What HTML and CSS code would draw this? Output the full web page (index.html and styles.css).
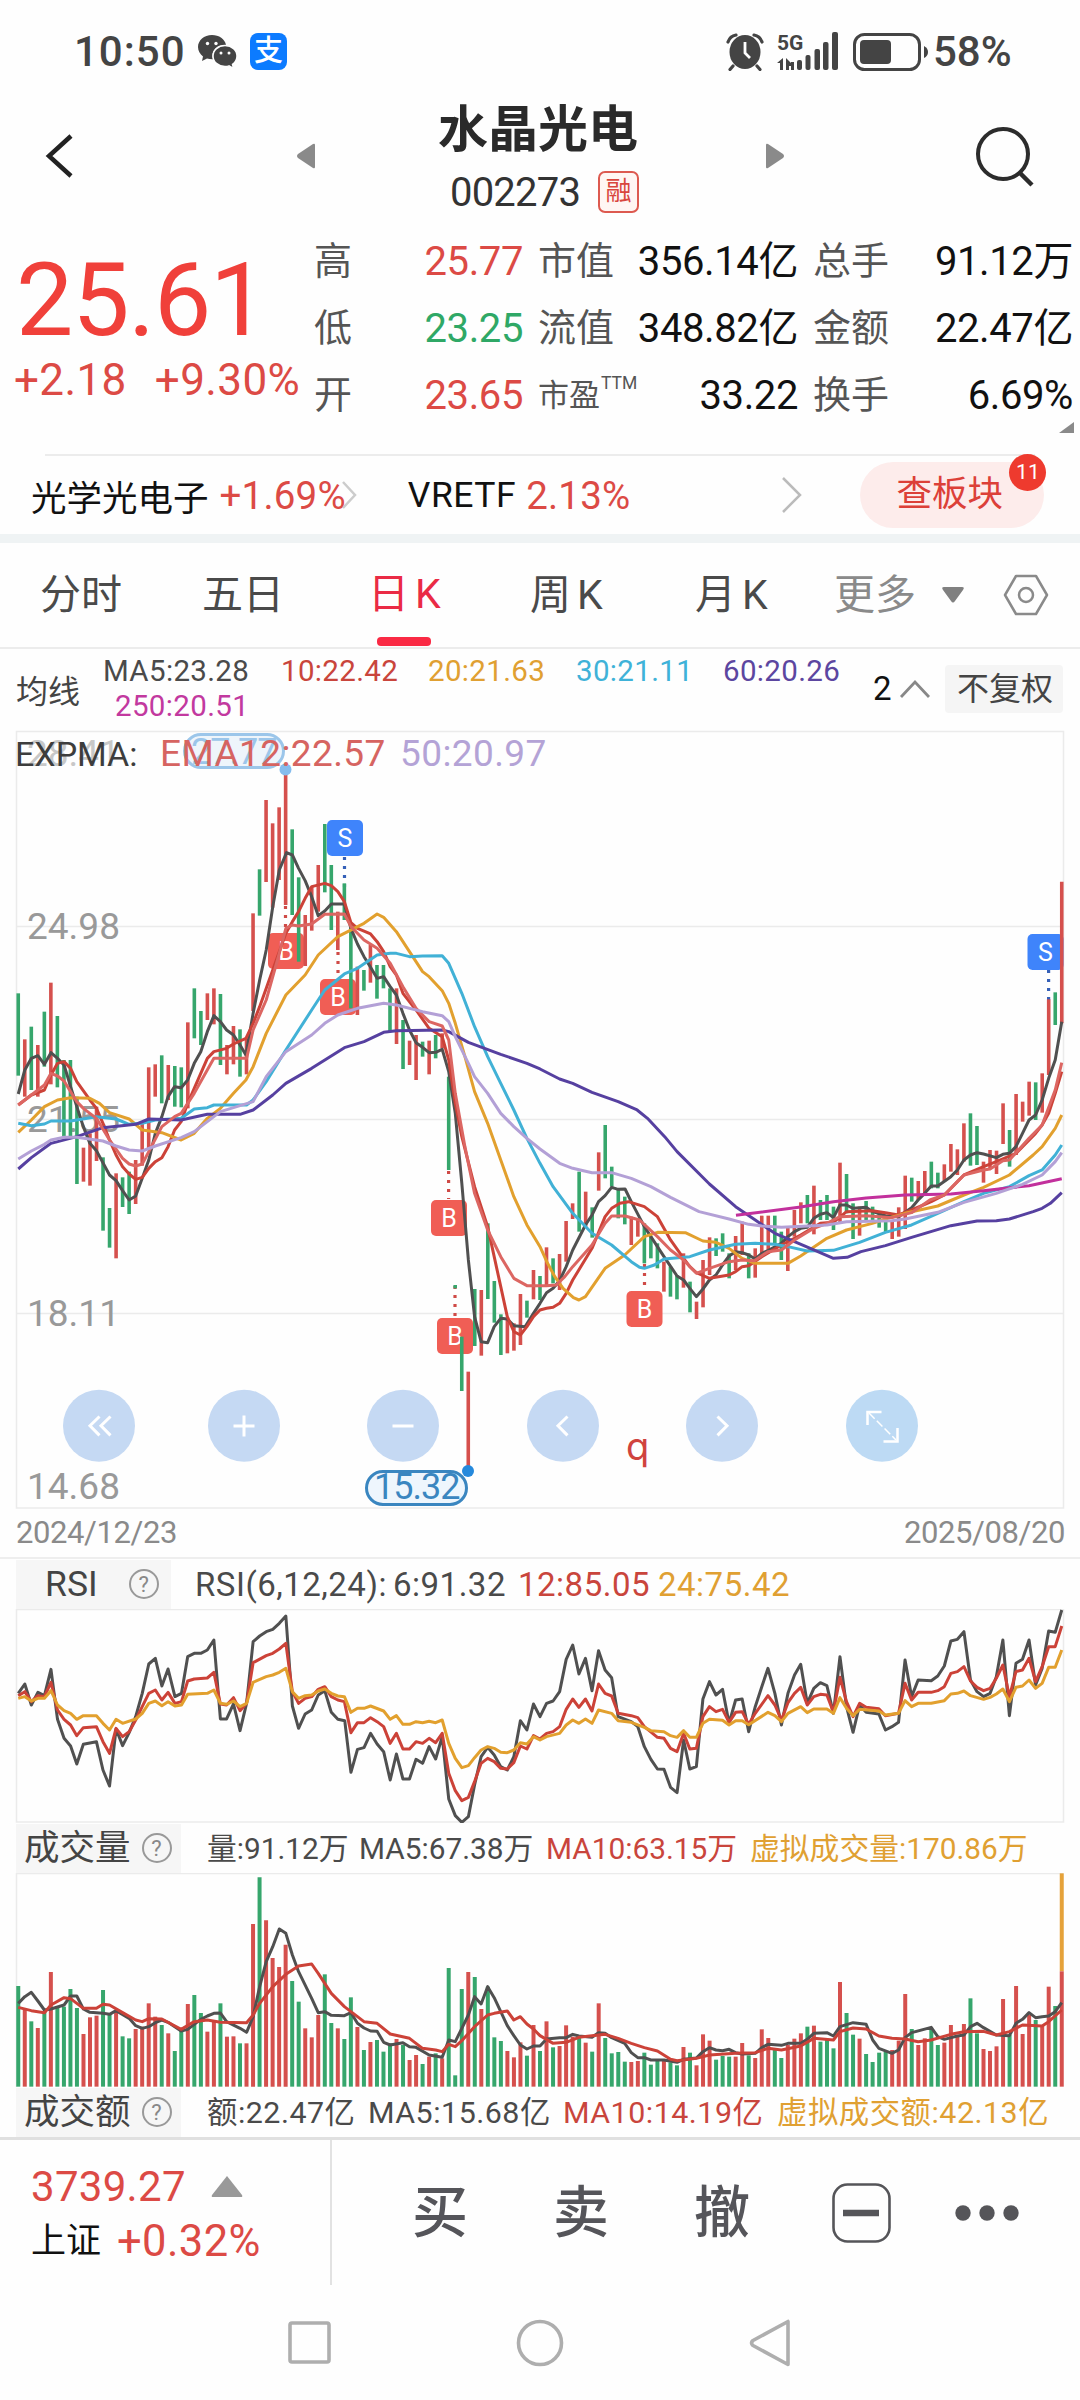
FILE: index.html
```html
<!DOCTYPE html>
<html lang="zh-CN">
<head>
<meta charset="utf-8">
<title>水晶光电 002273</title>
<link rel="stylesheet" href="styles.css">
</head>
<body>
<div class="phone">
  <div class="status">
    <span class="clock">10:50</span>
    <svg class="ic-wechat" width="40" height="34" viewBox="0 0 40 34"><path fill="#444" d="M14 0C6 0 0 5.500 0 12c0 4 2 7 5 9.500L4 26l5-2.500c2 .6 4 .9 6 .8A12 11 0 0 1 28 10C27 4 21 0 14 0z"/><path fill="#444" stroke="#fefefe" stroke-width="1.500" d="M27 10.500c-7 0-12 4.700-12 10.500s5 10.500 12 10.500c1.500 0 3-.2 4-.6l4.500 2.400-1-4c3-2 4.500-5 4.500-8.300 0-5.800-5-10.500-12-10.500z"/><g fill="#fefefe"><circle cx="9.500" cy="8.500" r="1.700"/><circle cx="18" cy="8.500" r="1.700"/><circle cx="23" cy="18" r="1.500"/><circle cx="31" cy="18" r="1.500"/></g></svg>
    <span class="alipay">支</span>
    <svg class="ic-alarm" width="38" height="38" viewBox="0 0 38 38"><ellipse cx="19" cy="19" rx="15.500" ry="17" fill="#444"/><path d="M2 9Q4 3 10 2M36 9Q34 3 28 2M7 33l-3 3.500M31 33l3 3.500" stroke="#444" stroke-width="3.200" fill="none" stroke-linecap="round"/><path d="M19 9v11l5 5" stroke="#fefefe" stroke-width="2.800" fill="none"/></svg>
    <svg class="ic-signal" width="62" height="40" viewBox="0 0 62 40"><text x="0" y="18" class="fiveg">5G</text><g fill="#444"><path d="M0 31l6-5v12H3v-7zM9 26l8 8h-5v4H9zM14 38v-8h3v8z"/><rect x="20" y="28" width="5" height="10" rx="2"/><rect x="28.500" y="23" width="5" height="15" rx="2"/><rect x="37.500" y="17" width="5.500" height="21" rx="2"/><rect x="46" y="10" width="5.500" height="28" rx="2"/><rect x="55" y="0" width="6" height="38" rx="2"/></g></svg>
    <svg class="ic-battery" width="76" height="38" viewBox="0 0 76 38"><rect x="1.500" y="1.500" width="65" height="35" rx="10" fill="none" stroke="#444" stroke-width="3"/><rect x="7" y="7" width="31" height="24" rx="4" fill="#444"/><path d="M71 13v12q4-2 4-6t-4-6z" fill="#444"/></svg>
    <span class="pct">58%</span>
  </div>

  <header class="head">
    <svg class="ic-back" width="30" height="50" viewBox="0 0 30 50"><path d="M26 5L4 25l22 20" fill="none" stroke="#222" stroke-width="4.500"/></svg>
    <svg class="tri-l" width="20" height="28" viewBox="0 0 20 28"><path d="M17 2L2 12q-2 2 0 4l15 10q2 1 2-1V3q0-2-2-1z" fill="#8a8a8a"/></svg>
    <div class="title"><h1>水晶光电</h1><div class="code"><span>002273</span><i>融</i></div></div>
    <svg class="tri-r" width="20" height="28" viewBox="0 0 20 28"><path d="M3 2l15 10q2 2 0 4L3 26q-2 1-2-1V3q0-2 2-1z" fill="#8a8a8a"/></svg>
    <svg class="ic-search" width="62" height="62" viewBox="0 0 62 62"><circle cx="28" cy="28" r="25" fill="none" stroke="#2c2c2c" stroke-width="4"/><path d="M44 46l13 13" stroke="#2c2c2c" stroke-width="4.500"/></svg>
  </header>

  <section class="quote">
    <div class="price"><div class="now">25.61</div><div class="chg"><span>+2.18</span><span>+9.30%</span></div></div>
    <div class="stats">
      <span class="k">高</span><span class="v red">25.77</span><span class="k">市值</span><span class="v">356.14亿</span><span class="k">总手</span><span class="v">91.12万</span>
      <span class="k">低</span><span class="v green">23.25</span><span class="k">流值</span><span class="v">348.82亿</span><span class="k">金额</span><span class="v">22.47亿</span>
      <span class="k">开</span><span class="v red">23.65</span><span class="k pe">市盈<sup>TTM</sup></span><span class="v">33.22</span><span class="k">换手</span><span class="v">6.69%</span>
    </div>
    <svg class="corner" width="16" height="12" viewBox="0 0 16 12"><path d="M15 0v11H0z" fill="#8a8a8a"/></svg>
  </section>

  <section class="sector">
    <span class="name">光学光电子</span><span class="up">+1.69%</span>
    <svg class="chev1" width="16" height="30" viewBox="0 0 16 30"><path d="M2 2l12 13L2 28" fill="none" stroke="#ccc" stroke-width="2.500"/></svg>
    <span class="name">VRETF</span><span class="up etf">2.13%</span>
    <svg class="chev2" width="22" height="38" viewBox="0 0 22 38"><path d="M2 2l17 17L2 36" fill="none" stroke="#bbb" stroke-width="2.500"/></svg>
    <span class="pill">查板块<b>11</b></span>
  </section>

  <nav class="tabs">
    <span>分时</span><span>五日</span><span class="on">日<em>K</em></span><span>周<em>K</em></span><span>月<em>K</em></span><span class="more">更多</span>
    <svg width="24" height="18" viewBox="0 0 24 18"><path d="M3 1h18q3 0 1 3l-8 11q-2 3-4 0L2 4Q0 1 3 1z" fill="#808080"/></svg>
    <svg width="46" height="42" viewBox="0 0 46 42"><path d="M13 2h20l11 19-11 19H13L2 21z" fill="none" stroke="#8a8a8a" stroke-width="2.500" stroke-linejoin="round"/><circle cx="23" cy="21" r="7" fill="none" stroke="#8a8a8a" stroke-width="2.500"/></svg>
  </nav>

  <section class="ma">
    <span class="ma-name">均线</span>
    <div class="ma-list"><span class="c-dark">MA5:23.28</span><span class="c-ma10">10:22.42</span><span class="c-or">20:21.63</span><span class="c-cy">30:21.11</span><span class="c-pu">60:20.26</span><span class="c-mg">250:20.51</span></div>
    <span class="two">2</span>
    <svg width="32" height="20" viewBox="0 0 32 20"><path d="M2 18L16 3l14 15" fill="none" stroke="#888" stroke-width="2.800"/></svg>
    <span class="fq">不复权</span>
  </section>

  <section class="kchart">
    <svg width="1080" height="790" viewBox="0 720 1080 790">
      <path d="M16.500 1508V731.500H1063.500V1508zM16.500 926.500H1063.500M16.500 1119.500H1063.500M16.500 1313.500H1063.500" class="frame"/>
      <g class="axis"><text x="27" y="766" fill="#c8c8c8">28.41</text><text x="27" y="938.500">24.98</text><text x="27" y="1131.500">21.55</text><text x="27" y="1325.500">18.11</text><text x="27" y="1498.500">14.68</text></g>
      <g class="ctl"><circle cx="99" cy="1425.700" r="36"/><circle cx="244" cy="1425.700" r="36"/><circle cx="403" cy="1425.700" r="36"/><circle cx="563" cy="1425.700" r="36"/><circle cx="722" cy="1425.700" r="36"/><circle cx="882" cy="1425.700" r="36" class="full"/>
        <path d="M99.500 1416.500l-9.500 9.200 9.500 9.700M110.500 1416.500l-9.500 9.200 9.500 9.700M233.500 1426h21M244 1415.500v21M392.500 1426h21M567.500 1416.500l-9.500 9.200 9.500 9.700M717.500 1416.500l9.500 9.200-9.500 9.700"/>
        <path class="thin" d="M867.500 1425v-13h14M897.500 1428v13.500h-14"/><path class="dash" d="M869 1413l27 27"/></g>
      <g id="markers" class="markers"></g>
      <g transform="translate(0 720) scale(.34439 .33333)">
        <g id="candles" class="candles"></g>
        <polyline class="ln c-dark" points="53,1122 72,1050 91,1015 110,1007 129,1033 148,998 167,1015 186,1035 205,1100 223,1160 242,1220 261,1270 280,1292 318,1365 337,1382 356,1412 375,1440 394,1428 413,1375 432,1320 451,1240 470,1190 488,1130 507,1100 526,1103 545,1080 564,1030 583,995 602,935 621,887 640,905 658,930 678,945 697,975 714,1005 735,880 754,780 773,690 792,560 811,450 832,398 849,405 867,445 886,482 905,530 924,587 943,573 962,552 1000,552 1019,625 1038,672 1057,710 1076,742 1095,775 1114,770 1133,800 1151,825 1170,880 1189,930 1208,968 1227,982 1246,998 1265,997 1284,988 1303,1055 1322,1180 1341,1390 1360,1620 1378,1790 1397,1865 1416,1868 1435,1820 1454,1795 1473,1797 1492,1817 1525,1820 1549,1780 1568,1750 1587,1718 1606,1705 1625,1682 1644,1640 1663,1590 1700,1515 1719,1485 1738,1445 1757,1427 1776,1402 1795,1408 1815,1407 1833,1445 1871,1520 1909,1580 1928,1610 1966,1668 1985,1680 2003,1705 2022,1730 2041,1707 2060,1680 2079,1665 2098,1635 2117,1608 2136,1595 2155,1598 2174,1605 2193,1617 2212,1600 2230,1592 2269,1570 2288,1550 2307,1535 2325,1525 2344,1522 2363,1495 2382,1483 2401,1478 2420,1493 2439,1455 2458,1455 2477,1465 2515,1462 2534,1475 2571,1487 2609,1490 2647,1463 2666,1440 2685,1420 2704,1398 2723,1398 2761,1370 2780,1350 2799,1320 2818,1305 2837,1298 2856,1302 2893,1313 2912,1303 2931,1300 2950,1280 2969,1240 2988,1200 3007,1185 3026,1140 3045,1075 3064,1020 3083,905"/>
        <polyline class="ln c-ma10" points="53,1155 91,1125 129,1110 148,1065 167,1030 186,1025 205,1045 223,1085 261,1140 280,1165 299,1210 318,1260 337,1305 356,1340 375,1362 394,1378 413,1372 432,1345 451,1325 470,1313 488,1280 507,1230 526,1205 545,1150 564,1105 602,1015 621,995 658,985 678,972 714,955 735,910 754,860 792,750 811,695 830,640 849,605 867,575 886,535 905,500 943,490 962,497 981,515 1000,545 1019,608 1038,625 1076,642 1095,665 1114,695 1133,740 1151,765 1170,820 1208,870 1246,925 1284,950 1303,1020 1322,1150 1341,1250 1378,1400 1416,1520 1454,1700 1473,1790 1492,1835 1511,1845 1530,1820 1549,1790 1568,1770 1587,1765 1606,1762 1625,1750 1644,1720 1663,1680 1719,1585 1757,1490 1776,1465 1800,1450 1825,1445 1871,1460 1909,1490 1947,1560 1985,1615 2003,1640 2022,1658 2060,1675 2117,1665 2136,1655 2155,1640 2174,1637 2212,1610 2269,1575 2325,1545 2382,1510 2420,1507 2458,1475 2533,1472 2571,1478 2609,1485 2647,1470 2704,1445 2742,1425 2780,1385 2799,1365 2856,1340 2893,1325 2950,1300 3007,1240 3026,1215 3045,1180 3064,1120 3083,1055"/>
        <polyline class="ln c-or" points="53,1237 91,1200 129,1160 167,1140 205,1133 261,1135 289,1150 318,1178 375,1197 413,1230 470,1238 526,1260 564,1240 602,1195 640,1165 678,1120 714,1080 735,1040 773,940 830,825 886,765 924,705 981,650 1057,610 1095,582 1114,592 1151,635 1189,695 1227,755 1246,770 1284,812 1303,850 1322,910 1350,1010 1378,1115 1416,1210 1454,1320 1492,1430 1530,1515 1568,1580 1590,1630 1611,1670 1635,1705 1665,1733 1681,1740 1700,1730 1757,1645 1814,1605 1871,1550 1909,1537 1990,1538 2041,1563 2079,1567 2117,1585 2155,1615 2193,1630 2288,1630 2325,1608 2401,1555 2458,1530 2533,1510 2571,1497 2628,1480 2723,1458 2799,1425 2856,1402 2931,1365 3000,1305 3026,1280 3064,1225 3083,1185"/>
        <polyline class="ln c-cy" points="53,1210 91,1217 129,1212 148,1203 205,1203 280,1190 337,1197 375,1213 413,1210 451,1200 526,1195 564,1167 602,1163 621,1155 716,1155 735,1140 773,1085 830,990 905,870 943,810 1000,762 1038,745 1095,705 1133,700 1151,700 1189,710 1227,708 1284,707 1303,730 1341,820 1378,920 1416,1010 1454,1090 1492,1170 1530,1255 1568,1330 1606,1400 1663,1480 1719,1540 1776,1575 1833,1625 1857,1642 1871,1645 1900,1635 1928,1617 2003,1610 2060,1590 2136,1573 2193,1570 2250,1573 2288,1580 2344,1593 2420,1591 2496,1567 2571,1537 2647,1515 2723,1480 2799,1445 2856,1420 2931,1400 2988,1367 3026,1350 3064,1305 3083,1275"/>
        <polyline class="ln c-pu" points="53,1347 91,1313 148,1270 223,1250 299,1223 394,1213 432,1197 526,1200 602,1183 697,1183 735,1170 792,1125 830,1090 905,1045 1000,983 1057,965 1114,937 1151,932 1284,930 1303,935 1360,967 1454,1003 1530,1030 1568,1047 1625,1077 1663,1090 1719,1117 1795,1145 1850,1170 1880,1195 1930,1250 1966,1295 2060,1392 2136,1460 2193,1500 2250,1540 2307,1565 2363,1590 2420,1615 2460,1612 2500,1595 2571,1577 2647,1552 2761,1517 2837,1503 2893,1502 2931,1497 3000,1475 3026,1465 3050,1450 3083,1418"/>
        <polyline class="ln c-mg" points="2137,1486 2325,1461 2420,1445 2515,1434 2628,1425 2761,1422 2856,1412 2988,1397 3083,1376"/>
        <polyline class="ln c-ema" points="53,1155 91,1125 129,1095 148,1060 167,1068 186,1083 223,1145 242,1165 280,1195 318,1260 356,1315 375,1332 394,1338 413,1332 432,1295 470,1220 507,1190 526,1180 564,1120 621,1015 716,1015 735,930 773,840 811,700 830,625 849,615 867,618 905,612 943,583 1000,582 1019,620 1057,660 1095,685 1133,730 1170,800 1208,865 1246,905 1284,918 1303,960 1322,1120 1350,1280 1378,1420 1416,1530 1454,1610 1492,1675 1530,1697 1587,1697 1615,1695 1640,1670 1663,1640 1719,1575 1757,1510 1776,1488 1815,1488 1857,1500 1909,1550 1947,1590 1985,1620 2022,1660 2060,1645 2117,1625 2155,1620 2190,1622 2230,1595 2269,1590 2307,1560 2363,1525 2401,1510 2439,1490 2515,1487 2590,1493 2647,1478 2700,1440 2742,1425 2799,1365 2856,1350 2875,1347 2912,1322 2931,1320 2988,1255 3026,1215 3064,1110 3083,1028"/>
        <polyline class="ln c-li" points="53,1317 91,1293 129,1273 148,1260 186,1252 223,1252 299,1263 337,1278 375,1290 413,1293 451,1278 526,1253 564,1235 640,1175 735,1145 773,1070 830,995 905,945 943,910 981,885 1038,865 1114,850 1151,855 1227,875 1284,887 1303,905 1322,950 1360,1030 1378,1070 1416,1120 1454,1180 1492,1220 1530,1255 1568,1287 1625,1330 1663,1345 1719,1358 1776,1358 1833,1375 1890,1400 1947,1432 2030,1475 2117,1497 2174,1513 2212,1518 2269,1522 2363,1517 2401,1515 2458,1505 2590,1502 2628,1497 2723,1477 2799,1447 2893,1420 2969,1393 3026,1365 3064,1325 3083,1298"/>
      </g>
      <rect x="184.500" y="734.500" width="99" height="33" rx="16.500" fill="#eef5fb" stroke="#9cc6ea" stroke-width="3"/><text x="191" y="764" class="tag" fill="#9cc6ea">27.77</text><circle cx="285.500" cy="769.500" r="6" fill="#85bced"/>
      <rect x="366.500" y="1471.500" width="100" height="33" rx="16.500" fill="#eef6fd" stroke="#3a86c0" stroke-width="3"/><text x="374" y="1499" class="tag" fill="#3a86c0">15.32</text><circle cx="468" cy="1471" r="6" fill="#2589dc"/>
      <text x="626" y="1459.500" class="q">q</text>
    </svg>
    <div class="expma"><span class="e0">EXPMA:</span><span class="e1">EMA12:22.57</span><span class="e2">50:20.97</span></div>
  </section>
  <div class="dates"><span>2024/12/23</span><span>2025/08/20</span></div>

  <section class="ind rsi">
    <div class="ind-head"><span class="tab"><b>RSI</b><i>?</i></span><span class="c-dark">RSI(6,12,24):</span><span class="c-dark">6:91.32</span><span class="c-ma10">12:85.05</span><span class="c-or">24:75.42</span></div>
    <svg width="1080" height="214" viewBox="0 1609 1080 214">
      <path d="M16.500 1609.500H1063.500V1822H16.500z" class="frame"/>
      <g transform="translate(0 1550) scale(.34439 .33333)">
        <polyline class="ln c-dark" points="53,430 72,402 91,465 110,427 129,437 148,358 167,508 186,565 205,588 223,642 242,583 280,575 299,660 318,708 337,537 356,587 375,548 394,500 413,430 432,342 451,325 470,408 488,357 508,440 527,430 545,320 564,310 583,310 602,300 621,270 640,507 658,507 678,462 697,542 716,460 735,275 754,258 773,245 792,238 811,220 830,198 849,468 867,535 886,492 905,480 924,435 943,422 962,487 981,508 1001,512 1019,667 1038,598 1057,593 1076,550 1095,582 1114,605 1133,690 1151,612 1170,687 1189,687 1208,628 1227,640 1246,590 1265,627 1284,560 1303,747 1322,797 1341,817 1360,800 1378,705 1397,620 1416,592 1435,615 1454,650 1473,660 1492,620 1511,512 1530,540 1549,462 1568,500 1587,460 1606,453 1625,425 1644,328 1663,285 1681,372 1700,325 1719,422 1738,302 1757,360 1776,383 1795,500 1833,515 1852,530 1871,590 1890,628 1909,657 1928,658 1947,712 1966,728 1985,570 2003,657 2022,650 2041,447 2060,395 2079,435 2098,418 2117,520 2136,450 2155,447 2174,545 2193,470 2212,410 2230,355 2250,430 2269,525 2288,430 2307,375 2325,343 2344,460 2363,415 2382,398 2401,407 2420,490 2439,320 2458,470 2477,547 2496,465 2515,487 2552,492 2571,540 2590,530 2609,517 2628,330 2647,440 2666,390 2704,392 2723,378 2742,348 2761,273 2780,268 2799,245 2818,390 2837,425 2856,440 2875,430 2893,380 2912,270 2931,497 2950,340 2969,328 2988,270 3007,405 3026,355 3045,243 3064,247 3083,180"/>
        <polyline class="ln c-ma10" points="53,437 72,425 91,455 110,437 129,440 148,397 167,480 186,508 205,525 223,557 242,533 280,530 299,575 318,610 337,535 356,560 375,545 394,510 413,470 432,430 451,420 470,450 488,427 508,460 527,455 545,393 564,387 602,384 621,367 640,462 658,465 678,443 697,482 716,460 735,338 773,317 792,310 811,297 830,280 849,425 867,460 886,445 905,440 924,418 943,410 962,440 981,450 1000,455 1019,548 1038,518 1057,518 1076,503 1095,515 1114,530 1133,580 1151,550 1170,597 1189,597 1208,575 1227,580 1246,565 1265,578 1284,550 1303,670 1322,722 1341,752 1360,742 1378,695 1397,640 1416,625 1435,635 1454,655 1473,657 1492,638 1511,588 1530,597 1549,557 1568,567 1587,550 1606,545 1625,530 1644,478 1663,447 1681,472 1700,447 1719,483 1738,402 1757,430 1776,438 1795,490 1833,497 1852,503 1871,530 1909,562 1928,565 1947,595 1966,605 1985,550 2003,597 2022,595 2041,500 2060,470 2079,485 2098,478 2117,517 2136,487 2155,485 2174,523 2193,490 2230,437 2250,465 2269,510 2288,458 2307,430 2325,412 2344,465 2363,440 2382,433 2401,435 2420,487 2439,382 2458,455 2477,500 2496,460 2515,472 2552,476 2571,497 2609,490 2628,400 2647,450 2666,427 2704,427 2723,422 2742,410 2761,370 2780,365 2799,350 2818,393 2837,412 2856,422 2875,415 2893,385 2912,345 2931,440 2950,365 2969,360 2988,325 3007,395 3026,350 3045,290 3064,290 3083,228"/>
        <polyline class="ln c-or" points="53,445 72,440 91,453 110,445 129,445 148,422 167,465 186,482 205,490 223,508 242,497 280,497 299,520 318,540 337,508 356,520 394,507 413,490 432,460 451,453 470,467 488,455 508,468 527,465 545,433 602,430 621,420 640,460 658,463 678,453 697,470 716,460 735,397 773,380 792,375 811,367 830,355 849,425 867,445 886,437 905,435 924,423 943,417 962,430 981,438 1000,440 1019,487 1038,475 1057,475 1076,468 1114,483 1133,508 1151,497 1170,523 1189,523 1208,515 1227,518 1246,514 1265,518 1284,510 1303,580 1322,625 1341,653 1360,647 1378,623 1397,600 1416,590 1435,595 1454,607 1473,608 1492,600 1511,578 1530,582 1549,560 1568,570 1587,560 1625,550 1644,525 1663,510 1681,520 1700,507 1719,520 1738,480 1776,490 1795,512 1833,517 1871,532 1890,542 1928,545 1947,557 1966,562 1985,542 2003,562 2022,562 2041,520 2060,508 2098,511 2117,525 2136,512 2155,512 2174,524 2230,487 2250,497 2269,515 2288,490 2325,470 2344,488 2363,477 2401,477 2420,490 2439,443 2458,475 2477,497 2496,478 2552,483 2571,495 2609,490 2628,452 2647,470 2666,460 2704,460 2742,452 2761,432 2780,430 2799,423 2818,437 2856,448 2875,442 2893,432 2912,417 2931,455 2950,412 2969,408 2988,390 3007,415 3026,400 3045,352 3064,352 3083,300"/>
      </g>
    </svg>
  </section>

  <section class="ind vol">
    <div class="ind-head"><span class="tab"><b>成交量</b><i>?</i></span><span class="c-dark">量:91.12万</span><span class="c-dark">MA5:67.38万</span><span class="c-ma10">MA10:63.15万</span><span class="c-or">虚拟成交量:170.86万</span></div>
    <svg width="1080" height="214" viewBox="0 1873 1080 214">
      <path d="M16.500 2087V1873.500H1063.500" class="frame"/>
      <g transform="translate(0 1830) scale(.34439 .33333)">
        <path d="M3083 130V424" stroke="#e5a23a" stroke-width="4" class="nss"/>
        <g id="volume" class="volume"></g>
        <polyline class="ln c-dark" points="53,520 72,500 91,487 110,513 129,540 148,537 186,525 205,498 223,498 242,537 261,547 299,550 318,553 337,542 375,565 394,587 413,595 432,590 451,578 470,570 488,577 526,603 545,598 583,568 602,558 621,550 640,549 658,575 697,595 716,607 735,560 754,470 773,395 792,350 811,297 830,310 849,375 867,425 905,505 924,548 943,545 962,556 1000,557 1019,548 1038,580 1057,594 1076,603 1095,604 1114,637 1133,645 1170,638 1189,650 1208,652 1246,675 1284,682 1303,630 1322,635 1341,595 1360,555 1378,500 1397,522 1416,470 1435,503 1454,545 1473,587 1492,617 1511,645 1530,657 1549,648 1568,648 1587,627 1625,623 1644,623 1663,613 1681,618 1719,622 1738,608 1757,610 1776,623 1814,640 1833,668 1852,683 1871,683 1890,690 1928,690 1966,697 1985,688 2022,684 2041,665 2060,653 2079,660 2098,662 2117,658 2136,668 2155,672 2193,670 2212,653 2230,643 2269,646 2288,640 2325,640 2344,628 2363,610 2401,608 2420,618 2439,590 2477,578 2515,583 2534,630 2552,655 2590,670 2609,660 2628,623 2647,608 2704,592 2723,620 2742,628 2780,618 2799,615 2818,590 2837,580 2856,593 2893,615 2931,617 2950,580 2969,568 2988,548 3007,563 3026,560 3045,558 3064,545 3083,518"/>
        <polyline class="ln c-ma10" points="53,532 91,542 129,548 148,525 186,503 205,506 242,535 280,535 299,523 318,525 356,548 394,570 413,575 432,566 470,567 526,598 564,575 602,570 640,577 716,578 735,555 754,520 792,470 830,433 867,408 905,402 924,430 962,490 1000,530 1057,575 1095,580 1133,612 1189,625 1227,655 1265,660 1284,665 1303,643 1322,650 1341,632 1378,590 1416,555 1435,550 1473,543 1492,570 1511,560 1530,582 1549,597 1568,617 1606,640 1644,637 1681,622 1757,613 1795,625 1833,640 1871,653 1909,663 1947,688 1966,692 2022,685 2060,675 2136,670 2193,668 2230,655 2269,660 2325,648 2363,625 2420,630 2439,605 2477,594 2515,597 2552,618 2590,625 2628,627 2666,635 2704,630 2761,613 2799,605 2856,604 2893,615 2931,605 2969,585 3026,588 3045,575 3083,540"/>
      </g>
    </svg>
  </section>

  <section class="ind amt">
    <div class="ind-head"><span class="tab"><b>成交额</b><i>?</i></span><span class="c-dark">额:22.47亿</span><span class="c-dark">MA5:15.68亿</span><span class="c-ma10">MA10:14.19亿</span><span class="c-or">虚拟成交额:42.13亿</span></div>
  </section>

  <footer class="bar">
    <div class="index"><div class="pt">3739.27<svg width="32" height="22" viewBox="0 0 32 22"><path d="M16 0l15 19q1 2-1 2H2q-2 0-1-2z" fill="#999"/></svg></div><div class="sh"><span>上证</span><b>+0.32%</b></div></div>
    <span class="act">买</span><span class="act">卖</span><span class="act">撤</span>
    <svg width="60" height="60" viewBox="0 0 60 60"><rect x="1.500" y="1.500" width="56" height="57" rx="14" fill="none" stroke="#555559" stroke-width="2.600"/><path d="M11 30h36" stroke="#555559" stroke-width="6.500"/></svg>
    <svg width="66" height="18" viewBox="0 0 66 18" fill="#555559"><circle cx="9" cy="9" r="7.700"/><circle cx="33" cy="9" r="7.700"/><circle cx="57" cy="9" r="7.700"/></svg>
  </footer>
  <div class="sysnav">
    <svg width="44" height="44" viewBox="0 0 44 44"><rect x="2" y="2" width="39" height="39" rx="2" /></svg>
    <svg width="48" height="48" viewBox="0 0 48 48"><circle cx="24" cy="24" r="21.500"/></svg>
    <svg width="44" height="50" viewBox="0 0 44 50"><path d="M39 3.500v43L4 27.500q-3-2.500 0-5z" stroke-linejoin="round"/></svg>
  </div>
</div>
<script src="app.js"></script>
</body>
</html>
```
FILE: styles.css
```css
* { box-sizing: border-box; }
body { margin: 0; background: #fefefe; }
.phone { width: 1080px; height: 2400px; overflow: hidden; background: #fefefe; color: #111; font-family: Roboto, "Noto Sans CJK SC", sans-serif; white-space: nowrap; }
svg { display: block; flex: none; }
h1, sup { margin: 0; }
i, em { font-style: normal; }
b { font-weight: 400; }

.status { height: 100px; display: flex; align-items: center; padding: 3px 0 0 74px; color: #444; font-size: 42px; font-weight: 500; }
.clock { width: 124px; letter-spacing: 1px; }
.ic-wechat { margin-right: 12px; }
.alipay { width: 37px; height: 37px; border-radius: 8px; background: #0c7bff; color: #fff; font-size: 29px; font-weight: 500; line-height: 36px; text-align: center; }
.ic-alarm { margin-left: 439px; }
.ic-signal { margin-left: 13px; }
.fiveg { font-size: 21px; font-weight: 700; fill: #444; }
.ic-battery { margin-left: 14px; }
.pct { margin-left: 4px; }

.head { height: 128px; display: grid; grid-template-columns: 251px 132px 312px 193px 147px; padding-left: 45px; align-items: start; }
.ic-back { margin-top: 31px; }
.tri-l, .tri-r { margin-top: 42px; }
.tri-r { margin-left: 25px; }
.ic-search { margin-left: 42px; margin-top: 26px; }
.title h1 { font-size: 50px; line-height: 60px; font-weight: 700; color: #2a2a2a; width: 220px; text-align: center; }
.code { display: flex; align-items: center; margin: 10px 0 0 22px; height: 44px; font-size: 40px; color: #333; letter-spacing: -.8px; }
.code i { margin-left: 18px; width: 41px; height: 42px; border: 2px solid #dd5a50; border-radius: 7px; font-size: 26px; line-height: 36px; text-align: center; color: #d9473d; letter-spacing: 0; background: #fff6f3; }

.quote { height: 226px; position: relative; display: flex; }
.price { width: 314px; padding: 16px 0 0 16px; color: #f0403a; }
.now { font-size: 102px; line-height: 112px; letter-spacing: -1.2px; }
.chg { margin: -1px 0 0 -2px; font-size: 44px; line-height: 50px; display: flex; gap: 28px; color: #dc4a45; letter-spacing: .4px; }
.stats { display: grid; grid-template-columns: 74px 135px 90px 185px 89px 186px; grid-auto-rows: 67px; font-size: 40px; line-height: 67px; }
.stats .k { font-size: 38px; color: #555; }
.stats .v { text-align: right; letter-spacing: -.4px; }
.stats .k:nth-child(6n+3), .stats .k:nth-child(6n+5) { padding-left: 15px; }
.stats .red { color: #dc4a45; }
.stats .green { color: #2fa866; }
.stats .pe { font-size: 31px; }
.pe sup { font-size: 17.500px; position: relative; top: -6px; left: 1px; vertical-align: super; line-height: 0; }
.corner { position: absolute; right: 5px; bottom: 20px; }

.sector { position: relative; height: 80px; display: flex; align-items: center; padding: 2px 0 0 31px; font-size: 35.500px; }
.sector::before { content: ""; position: absolute; left: 45px; right: 45px; top: 0; height: 2px; background: #ececec; }
.up { margin-left: 11px; color: #dc4a45; font-size: 38.500px; letter-spacing: .2px; }
.chev1 { margin-left: -5px; }
.chev1 + .name { margin-left: 51px; letter-spacing: .5px; }
.up.etf { margin-left: 10px; }
.chev2 { margin-left: 151px; }
.pill { position: relative; margin-left: 57px; margin-top: 0; width: 184px; height: 66px; padding-left: 36px; border-radius: 33px; background: #fdeceb; color: #dc4038; line-height: 65px; }
.pill b { position: absolute; right: -2px; top: -8px; width: 37px; height: 37px; border-radius: 50%; background: #ee3a2e; color: #fff; font-size: 21px; line-height: 37px; text-align: center; letter-spacing: 0; }

.tabs { height: 115px; border-top: 9px solid #eff3f4; border-bottom: 2px solid #ececec; display: grid; grid-template-columns: 162px 166px 162px 165px 139px 107px 62px 50px; padding-left: 40px; align-items: center; font-size: 41px; color: #4a4a4a; line-height: 102px; }
.tabs em { margin-left: 6px; }
.tabs .on { position: relative; color: #ea2b45; height: 104px; }
.tabs .on::after { content: ""; position: absolute; left: 9px; bottom: 1px; width: 54px; height: 9px; border-radius: 4px; background: #fa2a44; }
.tabs .more { color: #8a8a8a; }

.ma { height: 71px; display: flex; align-items: center; padding: 8px 0 0 16px; font-size: 32px; color: #444; }
.ma-name { width: 87px; }
.ma-list { width: 770px; height: 70px; display: grid; grid-template-columns: 178px 147px 148px 147px 140px; grid-auto-rows: 35px; line-height: 35px; font-size: 29.500px; letter-spacing: .35px; }
.ma-list .c-mg { padding-left: 12px; }
.two { font-size: 33px; color: #111; width: 26px; }
.fq { margin-left: 14px; width: 118px; height: 48px; line-height: 48px; padding-left: 12px; background: #f5f5f5; border-radius: 4px; }

.c-dark { color: #4a4a4a; stroke: #505050; }
.c-ma10 { color: #c9453c; stroke: #cc4238; }
.c-or { color: #e0a032; stroke: #e2a02e; }
.c-cy { color: #3fb2d8; stroke: #41b1d6; }
.c-pu { color: #5c46a0; stroke: #5640a0; }
.c-mg { color: #c2399f; stroke: #c2309c; }
.c-ema { stroke: #dc6662; }
.c-li { stroke: #b3a0d6; }
span { stroke: none; }

.kchart { position: relative; height: 789px; }
.frame { fill: none; stroke: #ebebeb; stroke-width: 1.500; }
.axis { font-size: 37px; fill: #999; }
.ctl circle { fill: #c5d9f3; }
.ctl .full { fill: #bddaf4; }
.ctl path { fill: none; stroke: #fff; stroke-width: 3; }
.ctl .thin { stroke-width: 2.500; }
.ctl .dash { stroke-width: 1.500; stroke-dasharray: 8 3; }
.ln { fill: none; stroke-width: 3; stroke-linejoin: round; vector-effect: non-scaling-stroke; }
.nss { vector-effect: non-scaling-stroke; }
.candles path, .volume path { stroke-width: 3.600; vector-effect: non-scaling-stroke; fill: none; }
.volume path { stroke-width: 4; }
.r { stroke: #d5504d; }
.g { stroke: #36a66c; }
.markers text { fill: #fff; font-size: 25px; text-anchor: middle; }
.tag { font-size: 36px; letter-spacing: -1px; }
.q { font-size: 38px; fill: #d0433e; font-family: Inter, Roboto, sans-serif; }
.expma { position: absolute; left: 15px; top: 10px; display: flex; align-items: baseline; height: 48px; line-height: 48px; }
.e0 { width: 145px; font-size: 34px; color: #3d3d3d; }
.e1 { width: 240px; font-size: 37px; color: #d66461; letter-spacing: .4px; }
.e2 { font-size: 37px; color: #b4a3d6; letter-spacing: .4px; }

.dates { height: 50px; padding: 0 15px 0 16px; display: flex; justify-content: space-between; font-size: 31px; line-height: 47px; color: #8a8a8a; letter-spacing: -.4px; border-bottom: 2px solid #eee; }
.ind { width: 1080px; }
.ind-head { height: 50px; display: grid; align-items: center; padding-left: 16px; line-height: 49px; font-size: 32px; }
.rsi .ind-head { grid-template-columns: 179px 198px 125px 140px 200px; font-size: 33px; letter-spacing: .5px; }
.vol .ind-head { grid-template-columns: 191px 152px 187px 204px 300px; font-size: 29.800px; }
.amt .ind-head { grid-template-columns: 191px 161px 195px 214px 300px; font-size: 30.400px; letter-spacing: .5px; }
.tab { display: flex; align-items: center; background: #f6f6f6; height: 49px; width: 165px; padding-left: 8px; color: #444; letter-spacing: 0; }
.tab b { font-size: 35.500px; }
.tab i { margin-left: 11px; width: 30px; height: 30px; border: 2px solid #999; border-radius: 50%; font-size: 22px; line-height: 27px; text-align: center; color: #888; }
.rsi .tab { width: 155px; padding-left: 29px; }
.rsi .tab i { margin-left: 31px; }

.bar { height: 148px; border-top: 3px solid #e0e0e0; display: flex; align-items: center; }
.index { width: 332px; height: 145px; border-right: 2px solid #e2e2e2; padding: 19px 0 0 31px; color: #dc4a45; margin-right: 80px; }
.pt { display: flex; align-items: center; font-size: 42px; line-height: 56px; letter-spacing: .3px; }
.pt svg { margin-left: 25px; }
.sh { display: flex; align-items: center; font-size: 35px; line-height: 54px; color: #111; }
.sh b { margin-left: 16px; color: #dc4a45; font-size: 43.500px; letter-spacing: .4px; }
.act { width: 141px; font-size: 56px; font-weight: 500; color: #55555a; line-height: 70px; margin-top: 0; }
.bar > svg:nth-of-type(1) { margin-left: -3px; }
.bar > svg:nth-of-type(2) { margin-left: 62px; }
.sysnav { height: 115px; display: grid; grid-template-columns: 228px 233px 100px; padding-left: 288px; align-items: center; }
.sysnav svg { fill: none; stroke: #aeaeae; stroke-width: 3.600; }
```
FILE: app.js
```js
// Daily bars, oldest first: colour letter, high, low (chart units, three per pixel).
const DAYS = `g820-1067 r958-1130 g920-1110 r975-1130 g875-1040 r788-1093 g888-1102 g1020-1248 g1020-1250 g1130-1392
r1283-1385 r1240-1397 r1160-1323 g1312-1532 g1464-1583 r1360-1615 g1372-1461 g1355-1482 r1320-1452 r1210-1337
r1042-1290 r1033-1130 g1006-1150 r1035-1140 g1038-1160 g1042-1162 r907-1165 g805-955 g873-975 r820-900
r805-913 g822-1035 r975-1063 r918-1033 g928-1070 r955-1063 r580-873 g448-587 r240-486 r310-563
r262-480 r165-555 g328-585 g472-725 r585-738 r500-632 r435-575 g312-517 g435-630 r575-690
g490-600 g610-865 r740-885 g750-812 r675-788 g735-836 g735-805 g805-935 r805-972 g900-1047
r962-1035 r945-1080 g965-1010 r962-1063 g945-1015 r940-985 g1070-1350 g1695-1705 g1850-2013 r1955-2240
g1707-1878 r1710-1907 g1510-1737 g1683-1808 g1783-1905 r1800-1900 r1810-1892 r1722-1875 g1742-1793 r1650-1738
g1668-1740 r1582-1700 g1615-1690 r1602-1710 r1503-1625 r1450-1497 g1355-1535 r1415-1520 g1462-1553 r1297-1412
g1215-1375 g1340-1400 g1405-1495 g1430-1513 r1490-1575 r1500-1550 g1510-1630 g1550-1615 g1570-1645 r1625-1715
g1640-1730 g1665-1738 r1600-1703 g1685-1777 r1745-1797 r1620-1762 r1552-1665 g1555-1608 g1540-1595 g1600-1675
r1548-1650 r1505-1605 g1600-1675 r1585-1673 r1487-1600 r1487-1600 g1487-1570 g1535-1620 r1520-1653 r1470-1550
r1447-1510 g1425-1510 r1397-1543 g1440-1500 g1425-1500 g1460-1530 r1328-1512 g1362-1480 g1450-1557 r1460-1547
g1443-1500 g1460-1500 g1480-1523 g1490-1537 r1500-1557 r1462-1550 r1367-1527 g1373-1445 r1383-1440 r1353-1420
g1325-1405 g1358-1405 r1333-1385 r1272-1355 r1288-1365 r1210-1325 g1180-1337 g1218-1335 r1325-1388 r1290-1345
r1292-1362 r1150-1272 g1230-1340 r1122-1305 r1145-1205 r1085-1187 g1087-1200 r1060-1178 r838-1065 g817-915
r485-910`.split(/\s+/);

// Top edge of each volume bar, same day order.
const VOLUME = [468,540,574,594,545,426,530,530,477,534,612,562,557,480,550,543,619,625,597,590,520,560,585,610,663,600,522,495,549,605,575,520,620,619,640,640,282,142,271,384,411,344,453,515,595,622,555,433,579,595,627,502,591,660,636,630,665,640,627,645,690,675,702,680,670,685,414,736,477,426,441,537,470,622,633,663,682,637,677,585,663,
574,652,648,586,620,615,638,665,520,624,670,666,695,696,693,668,704,692,688,697,706,651,668,706,613,632,689,678,680,680,639,676,684,598,624,655,684,645,626,610,590,587,635,630,655,456,549,614,626,672,696,668,665,660,632,492,597,645,625,600,645,638,585,620,582,505,610,657,663,649,507,615,468,612,555,570,585,470,528,424];

const x = i => (53 + 18.9375 * i).toFixed(1);
document.getElementById('candles').innerHTML = DAYS.map((d, i) => {
  const [hi, lo] = d.slice(1).split('-');
  return `<path class="${d[0]}" d="M${x(i)} ${hi}V${lo}"/>`;
}).join('');
document.getElementById('volume').innerHTML = VOLUME.map((v, i) =>
  `<path class="${DAYS[i][0]}" d="M${x(i)} 770V${v}"/>`).join('');

// Trade markers in pixels: letter, left, top, line x, line start, line end.
const TRADES = [
  ['S', 327, 820, 344.5, 857, 888], ['B', 268, 933, 285.5, 906, 932], ['B', 320, 979, 338, 952, 978],
  ['B', 431, 1200, 448.6, 1171, 1199], ['B', 437, 1318, 455, 1286, 1317], ['B', 626.5, 1291, 644.5, 1264, 1291],
  ['S', 1027.5, 934, 1048.6, 970, 1000]
];
document.getElementById('markers').innerHTML = TRADES.map(([t, l, y, lx, a, b]) => {
  const sell = t === 'S';
  return `<path d="M${lx} ${a}V${b}" stroke="${sell ? '#3560b8' : '#cf4a46'}" stroke-width="3.2" stroke-dasharray="3 6"/>` +
    `<rect x="${l}" y="${y}" width="36" height="36" rx="5" fill="${sell ? '#3f84fb' : '#f05e55'}"/>` +
    `<text x="${l + 18}" y="${y + 26.5}">${t}</text>`;
}).join('');
```
